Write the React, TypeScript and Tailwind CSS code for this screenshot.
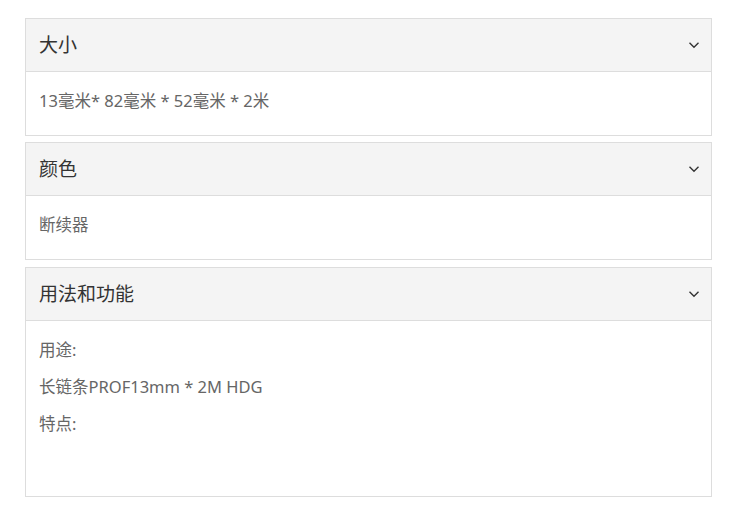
import React from 'react'

const sections = [
  { title: '大小', lines: ['13毫米* 82毫米 * 52毫米 * 2米'], cls: '', body: 'pb-[19px]' },
  { title: '颜色', lines: ['断续器'], cls: 'mt-[6px]', body: 'pb-[19px]' },
  {
    title: '用法和功能',
    lines: ['用途:', '长链条PROF13mm * 2M HDG', '特点:', ''],
    cls: 'mt-[7px]',
    body: 'pb-[20px]',
  },
]

function Chevron() {
  return (
    <svg width="12" height="8" viewBox="0 0 12 8" fill="none" className="shrink-0">
      <path d="M1.5 1.8 L6 6.2 L10.5 1.8" stroke="#333" strokeWidth="1.4" />
    </svg>
  )
}

export default function App() {
  return (
    <div
      className="w-[752px] h-[523px] bg-white pt-[18px] pl-[25px]"
      style={{ fontFamily: '"Noto Sans", "Noto Sans CJK SC", sans-serif' }}
    >
      <div className="w-[687px] flex flex-col">
        {sections.map((s) => (
          <div key={s.title} className={`border border-[#dddddd] ${s.cls}`}>
            <div className="h-[53px] bg-[#f4f4f4] border-b border-[#dddddd] flex items-center justify-between pl-[13px] pr-[11px]">
              <span className="text-[19px] text-[#333333]">{s.title}</span>
              <Chevron />
            </div>
            <div className={`pt-[14px] pl-[13px] flex flex-col gap-[7px] ${s.body}`}>
              {s.lines.map((l, i) => (
                <p key={i} className="text-[16.5px] leading-[30px] h-[30px] text-[#666666]">
                  {l}
                </p>
              ))}
            </div>
          </div>
        ))}
      </div>
    </div>
  )
}
